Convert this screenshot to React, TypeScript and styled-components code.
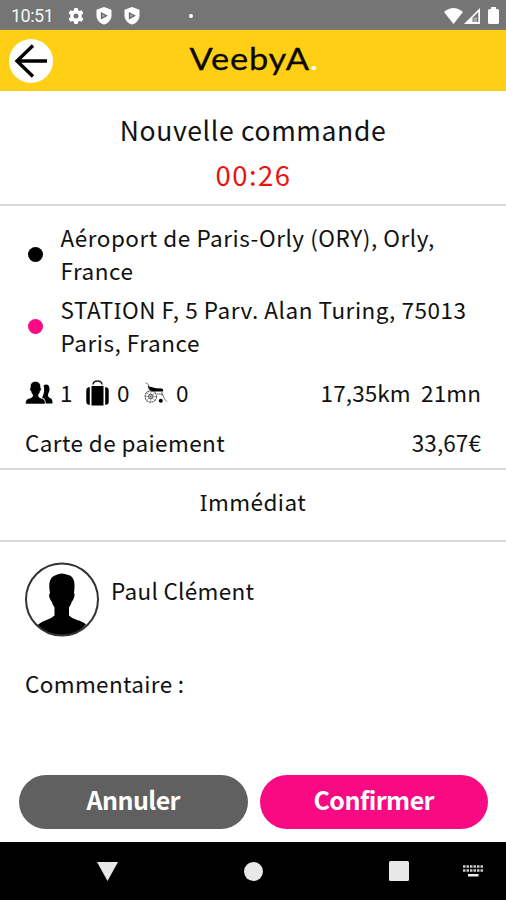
import React from "react";
import styled, { createGlobalStyle } from "styled-components";

const GlobalStyle = createGlobalStyle`
  * { box-sizing: border-box; }
  body { margin: 0; background: #fff; }
`;

const Screen = styled.div`
  width: 506px;
  height: 900px;
  display: flex;
  flex-direction: column;
  overflow: hidden;
  background: #fff;
  color: #111;
  font-family: "Noto Sans CJK SC", "Noto Sans", sans-serif;
  font-size: 22.5px;
  line-height: 33px;
  white-space: nowrap;
`;

const StatusBar = styled.div`
  height: 30px;
  flex: none;
  display: flex;
  align-items: center;
  padding: 1px 7px 0 11px;
  background: #757575;
  color: #f4f4f4;
`;

const Clock = styled.span`
  width: 57px;
  font: 400 18px/28px Roboto, sans-serif;
  letter-spacing: -0.5px;
`;

const StatusIcons = styled.div<{ $gap: number }>`
  display: flex;
  align-items: center;
  gap: ${(p) => p.$gap}px;
`;

const NoticeDot = styled.i`
  width: 4px;
  height: 4px;
  margin: 0 auto 0 49px;
  border-radius: 50%;
  background: #fff;
`;

const Header = styled.header`
  height: 61px;
  flex: none;
  display: grid;
  grid-template-columns: 44px 1fr 44px;
  align-items: center;
  padding: 0 9px;
  background: #fecf15;
`;

const BackButton = styled.button`
  width: 44px;
  height: 44px;
  padding: 0;
  border: 0;
  border-radius: 50%;
  background: #fff;
  display: flex;
`;

const Logo = styled.div`
  height: 61px;
  padding-left: 2px;
  font: 400 31px/57px Lato, sans-serif;
  letter-spacing: 0.7px;
  text-align: center;
  color: #0b0900;
  -webkit-text-stroke: 0.3px currentColor;
  transform: scaleX(1.11);
`;

const LogoDot = styled.span`
  color: #fff;
`;

const Section = styled.section<{ $height: number; $top: number }>`
  height: ${(p) => p.$height}px;
  flex: none;
  padding: ${(p) => p.$top}px 25px 0;
  border-bottom: 2px solid #dadada;
`;

const Title = styled.h1`
  margin: 0;
  font-size: 26.5px;
  font-weight: 400;
  line-height: 43px;
  letter-spacing: 0.65px;
  text-align: center;
`;

const Countdown = styled.div`
  padding-left: 1px;
  font-size: 27.5px;
  line-height: 46px;
  letter-spacing: 1.5px;
  text-align: center;
  color: #ec1212;
`;

const Stop = styled.div`
  display: flex;
  align-items: center;
  gap: 17.5px;
  padding-left: 3px;
  margin-bottom: 6px;
`;

const StopDot = styled.i<{ $color: string }>`
  width: 15px;
  height: 15px;
  flex: none;
  border-radius: 50%;
  background: ${(p) => p.$color};
`;

const Text = styled.div<{ $spacing: number }>`
  letter-spacing: ${(p) => p.$spacing}px;
`;

const SerifCapital = styled.span`
  font-family: "Noto Sans", sans-serif;
  line-height: 1;
`;

const Row = styled.div<{ $top: number }>`
  display: flex;
  justify-content: space-between;
  margin-top: ${(p) => p.$top}px;
`;

const Counts = styled.div`
  display: flex;
  align-items: center;
`;

const Count = styled.span<{ $width: number }>`
  width: ${(p) => p.$width}px;
  padding-left: 7px;
`;

const Immediate = styled.div`
  text-align: center;
  letter-spacing: 0.45px;
`;

const Details = styled.section`
  flex: 1;
  padding: 20px 25px 0;
`;

const Customer = styled.div`
  display: flex;
  gap: 12px;
  height: 105px;
`;

const Name = styled.div`
  padding-top: 12px;
  letter-spacing: 0.3px;
`;

const Actions = styled.div`
  flex: none;
  display: flex;
  gap: 12px;
  padding: 0 18px 13px 19px;
`;

const ActionButton = styled.button<{ $color: string }>`
  flex: 1;
  height: 54px;
  padding: 0 0 5px;
  border: 0;
  border-radius: 27px;
  background: ${(p) => p.$color};
  color: #fff;
  font: 700 25px/49px "Noto Sans CJK SC", sans-serif;
  letter-spacing: -0.55px;
`;

const NavBar = styled.nav`
  height: 58px;
  flex: none;
  background: #000;
  display: flex;
  align-items: center;
  padding: 0 23px 0 97px;
`;

const NavItem = styled.div<{ $after: number }>`
  display: flex;
  margin-right: ${(p) => p.$after}px;
`;

function Gear() {
  return (
    <svg width="16" height="16" viewBox="0 0 16 16">
      <path fill="#fff" fillRule="evenodd" d="M6.3 0h3.4l.5 2.3 1.2.7 2.3-.8 1.7 3L13.7 6.8v2.4l1.7 1.6-1.7 3-2.3-.8-1.2.7-.5 2.3H6.3l-.5-2.3-1.2-.7-2.3.8-1.7-3 1.7-1.6V6.8L.6 5.2l1.7-3 2.3.8 1.2-.7zM8 5.5a2.5 2.5 0 1 0 0 5 2.5 2.5 0 0 0 0-5z" />
    </svg>
  );
}

function Shield() {
  return (
    <svg width="16" height="18" viewBox="0 0 16 18">
      <path fill="#fff" d="M8 0l7.5 2.8v5.4c0 4.5-3 8-7.5 9.4C3.500 16.200.5 12.700.5 8.200V2.800z" />
      <path fill="#aaa" stroke="#666" strokeWidth="1.300" d="M5.500 6v5.400L10.500 8.700z" />
    </svg>
  );
}

function Wifi() {
  return (
    <svg width="19" height="16" viewBox="0 0 19 16">
      <path fill="#fff" d="M0 4Q9.500-3.800 19 4L9.500 16z" />
    </svg>
  );
}

function Signal() {
  return (
    <svg width="16" height="16" viewBox="0 0 16 16">
      <path fill="#fff" fillRule="evenodd" d="M16 0v16H0zM14.300 4L8.500 9.800V14h5.800z" />
      <path fill="#a8a8a8" d="M9.500 9.500h3.500V14H9.500z" />
    </svg>
  );
}

function Battery() {
  return (
    <svg width="11" height="17" viewBox="0 0 11 17">
      <path fill="#fff" d="M3 0h5v2h1.500Q11 2 11 3.500v12Q11 17 9.500 17h-8Q0 17 0 15.500v-12Q0 2 1.500 2H3z" />
    </svg>
  );
}

function People() {
  return (
    <svg width="28" height="24" viewBox="0 0 28 24">
      <path d="M18.500 4.500c3-2.500 6.500-.5 6 4-.1 2-1 3.300-1.400 4.800-.3 2 .2 3 1.900 3.700 2 .7 2.500 2 2.500 5.500h-7c0-3.500-1-5-3.500-6 1.200-2 1.800-4 2-6 .3-2 .2-4-.5-6z" />
      <path stroke="#fff" strokeWidth=".7" d="M5.300 6.500C5 2.500 7 .4 10.500.4s5.500 2.200 5.200 6.200c1 .4.600 3-.5 3.700-.3 1.700-1 2.700-1.700 3.500 0 1.700.3 2.700 2.500 3.300 3.300.8 4.300 2 4.300 6H.5c0-4 1-5.200 4.500-6 2.300-.6 2.700-1.600 2.700-3.300-.8-.8-1.500-1.800-1.800-3.500C4.700 9.500 4.400 7 5.300 6.500z" />
    </svg>
  );
}

function Suitcase() {
  return (
    <svg width="25" height="26" viewBox="0 0 25 26">
      <path fill="none" stroke="#222" strokeWidth="1.600" d="M8 4.500Q8.500 1 12.500 1T17 4.500" />
      <path d="M6.500 6h12v19.500h-12zM3.500 7.300h1.300v17.500H3.500Q1.300 24.500 1.300 22V10Q1.300 7.800 3.500 7.300zM20.200 7.300h1.300q2.200.5 2.200 2.700v12q0 2.500-2.200 2.800h-1.300z" />
    </svg>
  );
}

function Wheelchair() {
  return (
    <svg width="25" height="22" viewBox="0 0 25 22">
      <path d="M3.500 4l8.500 2.300 6 .2q1.500.3 1.200 3H7.500Q5.500 9 4.800 7z" />
      <g fill="none" stroke="#555">
        <path strokeWidth=".8" d="M1.500.7l3 1.800L5.500 8M18 10v4M13 12h5.500l2 5 2.500 2.700" />
        <circle cx="6.800" cy="14.500" r="5.700" strokeWidth="1.100" strokeDasharray="2.200 .6" />
        <circle cx="6.800" cy="14.500" r="2.300" />
        <path strokeWidth=".5" d="M1 14.500h11.600M6.800 8.700v11.600M2.700 10.400l8.200 8.200M2.700 18.600l8.200-8.200" />
      </g>
      <circle cx="16.800" cy="18.700" r="2" />
    </svg>
  );
}

function Avatar() {
  return (
    <svg width="74" height="75" viewBox="0 0 74 75">
      <path d="M25 31C23 20 25 15 31 13q6-3 12 0 3 0 5 3.500 2.500 4 1 14.500 1.500 2-1 7-1.500 1.500-2 4l-2 3.500v8q3 3 8 4.500 6 1.500 9 4.500Q52 73.500 37 73.500T12.500 63q3-3 9-5 5-1.500 8-4.500v-8L27.500 42q-.5-2.500-2-4-2.500-5-.5-7z" />
      <circle cx="37" cy="37.500" r="36" fill="none" stroke="#333" strokeWidth="2" />
    </svg>
  );
}

function Keyboard() {
  return (
    <svg width="20" height="12" viewBox="0 0 20 12">
      <path stroke="#ccc" strokeWidth="2.500" strokeDasharray="2.500 1" d="M0 1.500h20M0 5.500h20" />
      <path fill="#eee" d="M5 9h10.500v2.500H5z" />
    </svg>
  );
}

export default function App() {
  return (
    <Screen>
      <GlobalStyle />
      <StatusBar>
        <Clock>10:51</Clock>
        <StatusIcons $gap={12}>
          <Gear />
          <Shield />
          <Shield />
        </StatusIcons>
        <NoticeDot />
        <StatusIcons $gap={8}>
          <StatusIcons $gap={1}>
            <Wifi />
            <Signal />
          </StatusIcons>
          <Battery />
        </StatusIcons>
      </StatusBar>
      <Header>
        <BackButton aria-label="Retour">
          <svg width="44" height="44" viewBox="0 0 44 44" fill="none" stroke="#000" strokeWidth="3.400">
            <path d="M38 22H8M24 6.500L8 22l16 15.500" />
          </svg>
        </BackButton>
        <Logo>
          VeebyA<LogoDot>.</LogoDot>
        </Logo>
      </Header>
      <Section $height={115} $top={17}>
        <Title>Nouvelle commande</Title>
        <Countdown>00:26</Countdown>
      </Section>
      <Section $height={264} $top={15}>
        <Stop>
          <StopDot $color="#000" />
          <Text $spacing={0.53}>
            Aéroport de Paris-Orly (ORY), Orly,
            <br />
            France
          </Text>
        </Stop>
        <Stop>
          <StopDot $color="#fb0a83" />
          <Text $spacing={0.54}>
            STAT<SerifCapital>I</SerifCapital>ON F, 5 Parv. Alan Turing, 75013
            <br />
            Paris, France
          </Text>
        </Stop>
        <Row $top={17}>
          <Counts>
            <People />
            <Count $width={32}>1</Count>
            <Suitcase />
            <Count $width={34}>0</Count>
            <Wheelchair />
            <Count $width={32}>0</Count>
          </Counts>
          <Text $spacing={0.1}>17,35km&nbsp; 21mn</Text>
        </Row>
        <Row $top={17}>
          <Text $spacing={0.4}>Carte de paiement</Text>
          <Text $spacing={0.1}>33,67€</Text>
        </Row>
      </Section>
      <Section $height={72} $top={15}>
        <Immediate>
          <SerifCapital>I</SerifCapital>mmédiat
        </Immediate>
      </Section>
      <Details>
        <Customer>
          <Avatar />
          <Name>Paul Clément</Name>
        </Customer>
        <Text $spacing={0.35}>Commentaire :</Text>
      </Details>
      <Actions>
        <ActionButton $color="#606060">Annuler</ActionButton>
        <ActionButton $color="#f80b82">Confirmer</ActionButton>
      </Actions>
      <NavBar>
        <NavItem $after={126}>
          <svg width="21" height="19" viewBox="0 0 21 19"><path fill="#e8e8e8" d="M0 0h21L10.500 19z" /></svg>
        </NavItem>
        <NavItem $after={126}>
          <svg width="19" height="19" viewBox="0 0 19 19"><circle cx="9.500" cy="9.500" r="9.500" fill="#e8e8e8" /></svg>
        </NavItem>
        <NavItem $after={54}>
          <svg width="20" height="20" viewBox="0 0 20 20"><rect width="20" height="20" rx="1.500" fill="#e8e8e8" /></svg>
        </NavItem>
        <NavItem $after={0}>
          <Keyboard />
        </NavItem>
      </NavBar>
    </Screen>
  );
}
